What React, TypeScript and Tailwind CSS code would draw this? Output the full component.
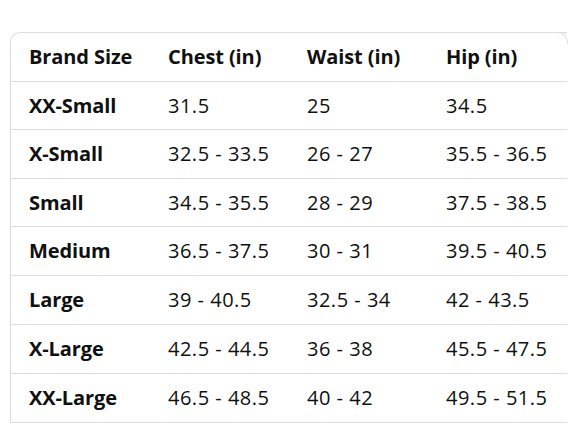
import React from "react";

const rows: [string, string, string, string][] = [
  ["XX-Small", "31.5", "25", "34.5"],
  ["X-Small", "32.5 - 33.5", "26 - 27", "35.5 - 36.5"],
  ["Small", "34.5 - 35.5", "28 - 29", "37.5 - 38.5"],
  ["Medium", "36.5 - 37.5", "30 - 31", "39.5 - 40.5"],
  ["Large", "39 - 40.5", "32.5 - 34", "42 - 43.5"],
  ["X-Large", "42.5 - 44.5", "36 - 38", "45.5 - 47.5"],
  ["XX-Large", "46.5 - 48.5", "40 - 42", "49.5 - 51.5"],
];

const heights = ["h-[48px]", "h-[49px]", "h-[48px]", "h-[49px]", "h-[49px]", "h-[49px]", "h-[48px]"];

const headers = ["Brand Size", "Chest (in)", "Waist (in)", "Hip (in)"];

export default function App() {
  return (
    <div
      className="w-[588px] h-[441px] bg-white pt-[32px] pl-[10px] text-[#0f1111]"
      style={{ fontFamily: '"Open Sans", "Noto Sans", sans-serif' }}
    >
      <div className="relative w-[557px] border-l border-t border-b border-[#dcdfdf] rounded-tl-[10px]">
        <div className="absolute -top-px -right-px w-[12px] h-[12px] border-t border-r border-[#dcdfdf] rounded-tr-[10px]" />
        <div className="grid grid-cols-[139px_139px_139px_140px] h-[49px] border-b border-[#dcdfdf]">
          {headers.map((h) => (
            <div key={h} className="flex items-center pl-[18px] text-[20px] font-bold leading-none tracking-[-0.1px]">
              {h}
            </div>
          ))}
        </div>
        {rows.map((r, i) => (
          <div
            key={r[0]}
            className={`grid grid-cols-[139px_139px_139px_140px] ${heights[i]} ${i < rows.length - 1 ? "border-b border-[#dcdfdf]" : ""}`}
          >
            {r.map((c, j) => (
              <div
                key={j}
                className={`flex items-center pl-[18px] text-[20px] leading-none ${j === 0 ? "font-bold tracking-[-0.1px]" : "font-normal tracking-[0.5px]"}`}
              >
                {c}
              </div>
            ))}
          </div>
        ))}
      </div>
    </div>
  );
}
